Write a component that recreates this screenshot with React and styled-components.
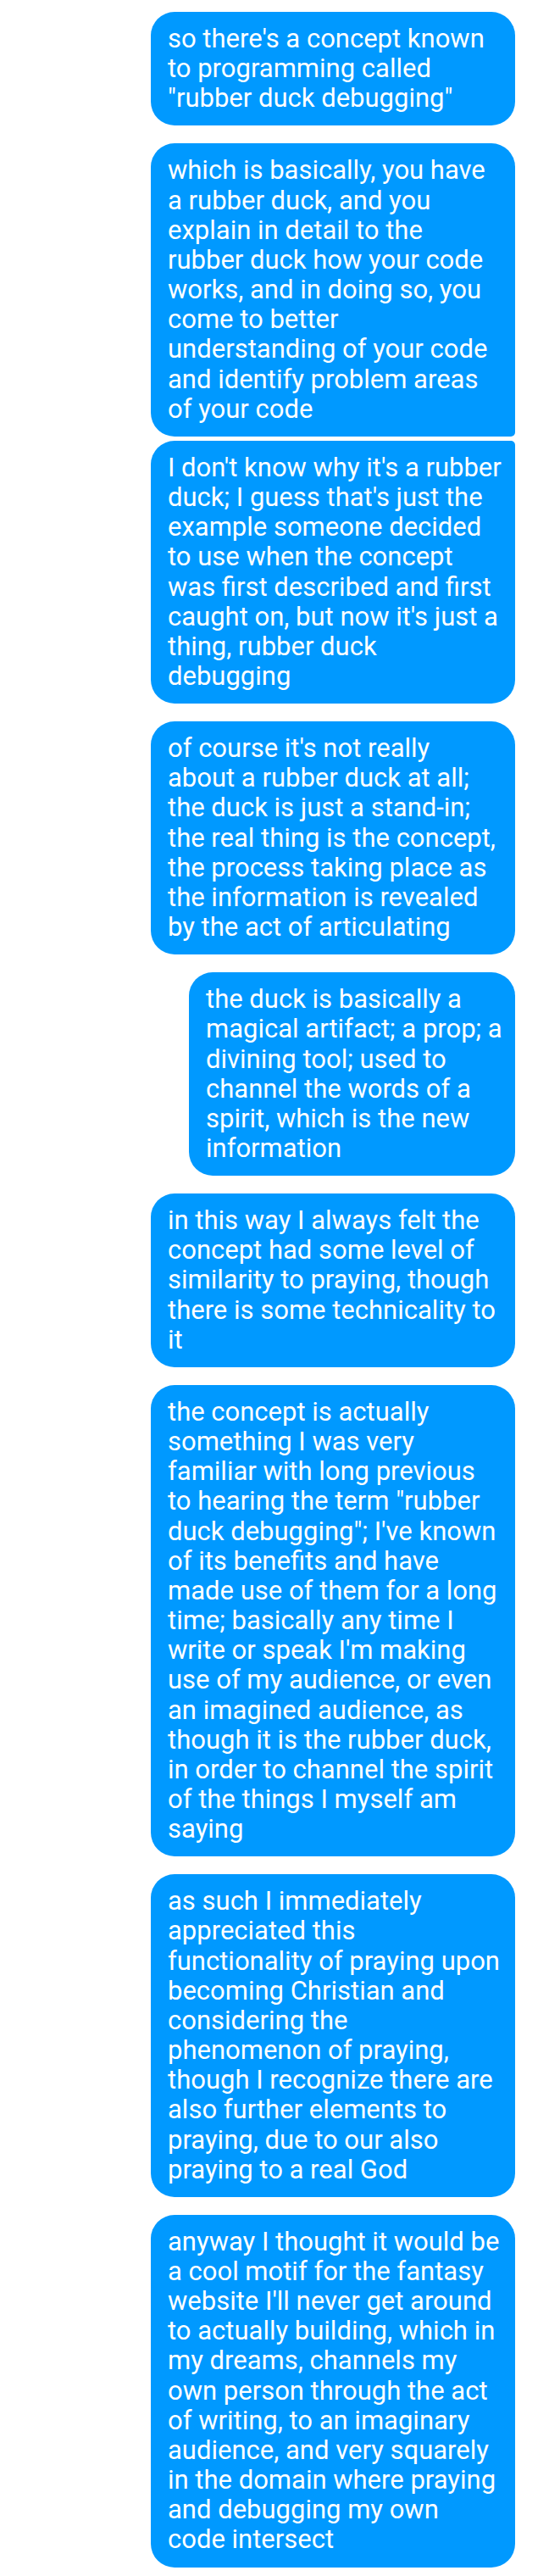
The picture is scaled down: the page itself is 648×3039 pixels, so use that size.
import React from "react";
import styled, { createGlobalStyle } from "styled-components";

const GlobalStyle = createGlobalStyle`
  html, body {
    margin: 0;
    padding: 0;
    background: #ffffff;
  }
  body {
    font-family: Roboto, "Noto Sans", "Liberation Sans", sans-serif;
  }
`;

const Thread = styled.div`
  width: 648px;
  box-sizing: border-box;
  padding: 14px 40px 11px 0;
  display: flex;
  flex-direction: column;
  align-items: flex-end;
`;

const Bubble = styled.div`
  box-sizing: border-box;
  width: ${(p) => (p.$width ? `${p.$width}px` : "430px")};
  margin-top: ${(p) => (p.$joined ? "5px" : "21px")};
  padding: 14px 18px 15px 20px;
  background: #0099ff;
  color: #ffffff;
  font-size: 31px;
  line-height: 35.15px;
  border-radius: 28px;
  border-top-right-radius: ${(p) => (p.$joined ? "5px" : "28px")};
  border-bottom-right-radius: ${(p) => (p.$continues ? "5px" : "28px")};

  &:first-child {
    margin-top: 0;
  }
`;

// one span per rendered line, so the wrapping matches the phone screenshot
const Line = styled.span`
  display: block;
  white-space: nowrap;
`;

const messages = [
  {
    lines: ["so there's a concept known", "to programming called", '"rubber duck debugging"'],
  },
  {
    lines: [
      "which is basically, you have",
      "a rubber duck, and you",
      "explain in detail to the",
      "rubber duck how your code",
      "works, and in doing so, you",
      "come to better",
      "understanding of your code",
      "and identify problem areas",
      "of your code",
    ],
    continues: true,
  },
  {
    lines: [
      "I don't know why it's a rubber",
      "duck; I guess that's just the",
      "example someone decided",
      "to use when the concept",
      "was first described and first",
      "caught on, but now it's just a",
      "thing, rubber duck",
      "debugging",
    ],
    joined: true,
  },
  {
    lines: [
      "of course it's not really",
      "about a rubber duck at all;",
      "the duck is just a stand-in;",
      "the real thing is the concept,",
      "the process taking place as",
      "the information is revealed",
      "by the act of articulating",
    ],
  },
  {
    lines: [
      "the duck is basically a",
      "magical artifact; a prop; a",
      "divining tool; used to",
      "channel the words of a",
      "spirit, which is the new",
      "information",
    ],
    width: 385,
  },
  {
    lines: [
      "in this way I always felt the",
      "concept had some level of",
      "similarity to praying, though",
      "there is some technicality to",
      "it",
    ],
  },
  {
    lines: [
      "the concept is actually",
      "something I was very",
      "familiar with long previous",
      'to hearing the term "rubber',
      'duck debugging"; I\'ve known',
      "of its benefits and have",
      "made use of them for a long",
      "time; basically any time I",
      "write or speak I'm making",
      "use of my audience, or even",
      "an imagined audience, as",
      "though it is the rubber duck,",
      "in order to channel the spirit",
      "of the things I myself am",
      "saying",
    ],
  },
  {
    lines: [
      "as such I immediately",
      "appreciated this",
      "functionality of praying upon",
      "becoming Christian and",
      "considering the",
      "phenomenon of praying,",
      "though I recognize there are",
      "also further elements to",
      "praying, due to our also",
      "praying to a real God",
    ],
  },
  {
    lines: [
      "anyway I thought it would be",
      "a cool motif for the fantasy",
      "website I'll never get around",
      "to actually building, which in",
      "my dreams, channels my",
      "own person through the act",
      "of writing, to an imaginary",
      "audience, and very squarely",
      "in the domain where praying",
      "and debugging my own",
      "code intersect",
    ],
  },
];

export default function App() {
  return (
    <>
      <GlobalStyle />
      <Thread>
        {messages.map((m, i) => (
          <Bubble key={i} $width={m.width} $joined={m.joined} $continues={m.continues}>
            {m.lines.map((line, j) => (
              <Line key={j}>{line}</Line>
            ))}
          </Bubble>
        ))}
      </Thread>
    </>
  );
}
